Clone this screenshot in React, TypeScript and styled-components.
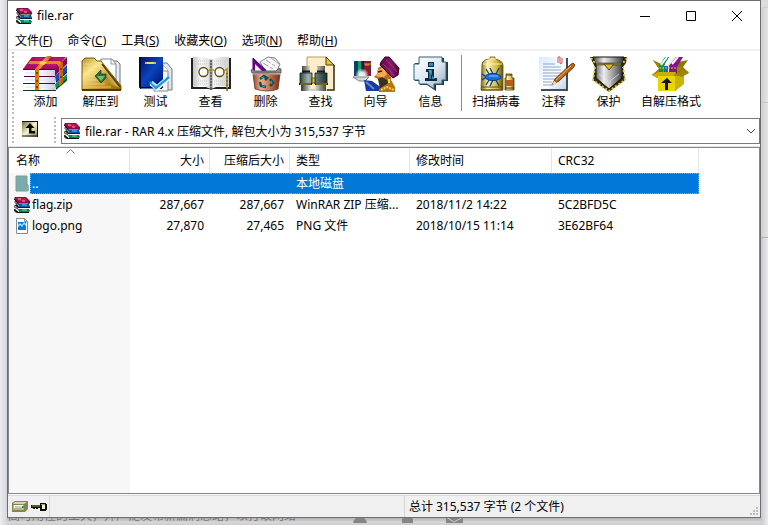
import React from "react";
import styled, { createGlobalStyle } from "styled-components";

const GlobalStyle = createGlobalStyle`
  * { box-sizing: border-box; }
  body {
    margin: 0;
    color: #000;
    font: 12px/16px "Noto Sans", "Noto Sans CJK SC", sans-serif;
  }
  button, select { font: inherit; color: inherit; }
`;

const Desktop = styled.div`
  min-height: 100vh;
  display: flex;
  flex-direction: column;
  padding: 0 7px;
  background:
    linear-gradient(#d0d0d0, #d0d0d0) right 7px / 7px 1px no-repeat,
    linear-gradient(#c8c8c8, #c8c8c8) right 102px / 7px 1px no-repeat,
    linear-gradient(#b0b0b0, #b0b0b0) right 237px / 7px 1px no-repeat,
    linear-gradient(90deg, #cfcfcf, #e6e6e6) right 8px / 7px 229px no-repeat,
    linear-gradient(90deg, #c9c9cb, #ececf0) right bottom / 7px calc(100vh - 238px) no-repeat,
    linear-gradient(90deg, #ededf1, #d6d6da) left top / 7px 100vh no-repeat,
    #dcdcdc;
`;

const Window = styled.main`
  flex: 1;
  display: flex;
  flex-direction: column;
  border: 1px solid #6e6e6e;
  background: #fff;
`;

const TitleBar = styled.header`
  display: flex;
  align-items: center;
  gap: 5px;
  height: 30px;
  padding-left: 8px;
`;

const Title = styled.h1`
  flex: 1;
  margin: 0;
  font-size: 12px;
  font-weight: 400;
`;

const CaptionButton = styled.button`
  display: grid;
  place-items: center;
  width: 46px;
  height: 30px;
  margin-left: -5px;
  padding: 0;
  border: 0;
  background: none;
`;

const MenuBar = styled.nav`
  display: flex;
  gap: 15px;
  height: 20px;
  padding: 2px 7px 0;
  border-bottom: 2px solid #f0f0f0;
`;

const MenuItem = styled.button`
  padding: 0;
  border: 0;
  background: none;
  line-height: 16px;
  white-space: nowrap;
`;

const Grip = styled.div`
  width: 2px;
  align-self: stretch;
  background: repeating-linear-gradient(#bdbdbd 0 2px, #fff 2px 4px);
`;

const Toolbar = styled.div`
  display: flex;
  height: 64px;
  padding: 1px 0 0 4px;
`;

const ToolButton = styled.button<{ $width?: number }>`
  display: flex;
  flex-direction: column;
  align-items: center;
  gap: 2px;
  width: ${(p) => p.$width ?? 55}px;
  padding: 4px 0 0;
  border: 0;
  background: none;
  line-height: 16px;
  white-space: nowrap;
`;

const ToolGap = styled.div`
  width: 4px;
`;

const Separator = styled.div`
  width: 1px;
  height: 56px;
  margin: 3px 4px 0 3px;
  background: #8c8c8c;
`;

const AddressRow = styled.div`
  display: flex;
  height: 32px;
  padding: 2px 0 3px 4px;
`;

const UpButton = styled.button`
  width: 16px;
  height: 16px;
  margin: 4px 16px 0 8px;
  padding: 0;
  border: 0;
  background: none;
  line-height: 0;
`;

const AddressBox = styled.div`
  flex: 1;
  display: flex;
  align-items: center;
  gap: 5px;
  height: 26px;
  margin: 1px 0 0 5px;
  padding: 0 3px 0 2px;
  border: 1px solid #7a7a7a;
`;

const AddressSelect = styled.select`
  flex: 1;
  min-width: 0;
  height: 24px;
  padding: 2px 0 0;
  border: 0;
  outline: 0;
  appearance: none;
  background: none;
`;

const ListPane = styled.section`
  flex: 1;
  display: flex;
  flex-direction: column;
  border: 1px solid #828790;
  box-shadow: 0 -1px 0 #e3e3e3;
`;

const FileTable = styled.table`
  width: 690px;
  table-layout: fixed;
  border-spacing: 0;
`;

const HeadCell = styled.th<{ $width: number; $right?: boolean }>`
  width: ${(p) => p.$width}px;
  height: 25px;
  padding: 0 5px 0 6px;
  border-right: 1px solid #e5e5e5;
  font-weight: 400;
  text-align: ${(p) => (p.$right ? "right" : "left")};
  white-space: nowrap;
  position: relative;

  &:first-child {
    padding-left: 7px;
  }
`;

const SortArrow = styled.svg`
  position: absolute;
  top: 1px;
  left: calc(50% - 3px);
`;

const Row = styled.tr`
  height: 21px;
`;

const Cell = styled.td<{ $right?: boolean; $selected?: boolean; $last?: boolean }>`
  height: 21px;
  padding: 0 6px;
  text-align: ${(p) => (p.$right ? "right" : "left")};
  white-space: nowrap;
  ${(p) =>
    p.$selected &&
    `color: #fff;
     background: #0078d7;
     border: 0 dotted #ff8a28;
     border-width: 1px ${p.$last ? 1 : 0}px 1px 0;`}
`;

const NameCell = styled.td`
  padding: 0;
  background: #f7f7f7;
`;

const NameContent = styled.div`
  display: flex;
  height: 21px;
`;

const FileIcon = styled.span`
  display: grid;
  place-items: center;
  width: 21px;
  padding-left: 5px;
`;

const FileName = styled.span<{ $selected?: boolean }>`
  flex: 1;
  padding-left: 2px;
  line-height: 21px;
  ${(p) =>
    p.$selected &&
    `color: #fff;
     background: #0078d7;
     border: 1px dotted #ff8a28;
     border-right: 0;
     padding-left: 1px;
     line-height: 19px;`}
`;

const NameFill = styled.div`
  flex: 1;
  width: 121px;
  background: #f7f7f7;
`;

const StatusBar = styled.footer`
  display: flex;
  height: 23px;
  padding-top: 2px;
  background: #f0f0f0;
  box-shadow: inset 0 1px 0 #fafafa, inset 0 2px 0 #d9d9d9;
`;

const StatusPane = styled.div<{ $width?: number }>`
  display: flex;
  align-items: center;
  gap: 3px;
  ${(p) => (p.$width ? `width: ${p.$width}px;` : "flex: 1;")}
  padding-left: 4px;
  border-right: 1px solid #d7d7d7;
  white-space: nowrap;
`;

const StatusFill = styled(StatusPane)`
  flex: 360;
`;

const StatusTotal = styled(StatusPane)`
  flex: 351;
  border-right: 0;
`;

const SizeGrip = styled.svg`
  align-self: flex-end;
  margin: 0 1px 1px 0;
`;

const Behind = styled.div`
  display: flex;
  align-items: flex-end;
  gap: 57px;
  height: 7px;
  padding-left: 1px;
  overflow: hidden;
  color: #777;
  border-bottom: 2px solid #d0d0d0;
  background: linear-gradient(#b4b4b4, #dcdcdc);
  line-height: 14px;
  white-space: nowrap;
`;

/* ---------- small icons ---------- */

const Books = () => (
  <svg width="16" height="16" viewBox="0 0 16 16" aria-hidden="true">
    <path d="M1 0H12L16 4V6H4L0 2Z" fill="#8b0a4c" />
    <path d="M2 1H11L14 4H5Z" fill="#c3126e" />
    <path d="M4 2H7M8 4H11" stroke="#e9b44c" />
    <path d="M0 2L4 6V7H15V6" fill="none" stroke="#160812" />
    <path d="M1 4L4 7L1 6ZM1 8L4 12L0 10ZM0 12L4 15L1 15Z" fill="#d9d9d9" stroke="#222" strokeWidth=".7" />
    <path d="M4 7H15L16 10H5Z" fill="#075aa6" />
    <path d="M8 8H13" stroke="#65c9ef" />
    <path d="M3 7L5 10H16V11H4L1 8" fill="#101828" />
    <path d="M4 12H15L16 14L15 15H5Z" fill="#078657" />
    <path d="M8 13H13" stroke="#7ae2a6" />
    <path d="M1 12L4 15H15V16H3L0 13Z" fill="#07150f" />
  </svg>
);

const UpIcon = () => (
  <svg width="16" height="16" viewBox="0 0 16 16" aria-hidden="true">
    <defs>
      <linearGradient id="up" x1="0" y1="0" x2="1" y2="1">
        <stop stopColor="#656631" /><stop offset=".5" stopColor="#f5f2cf" /><stop offset="1" stopColor="#77783d" />
      </linearGradient>
    </defs>
    <path fill="url(#up)" d="M0 0H16V16H0Z" />
    <path d="M0 .5H16M15.5 0V16M0 15H16" stroke="#111100" />
    <path d="M8 2L12.5 7H9.5V10H13V12.5H7V7H3.5Z" fill="#080800" />
  </svg>
);

const FolderIcon = () => (
  <svg width="14" height="17" viewBox="0 0 14 17" aria-hidden="true">
    <path d="M1 1H12V9L13 10V16H1Z" fill="#78aab3" stroke="#70a494" />
    <path d="M11 11V16M13 10V16" stroke="#8eae8f" />
  </svg>
);

const PngIcon = () => (
  <svg width="12" height="16" viewBox="0 0 12 16" aria-hidden="true">
    <path d="M.5 .5H8.5L11.5 3.5V15.5H.5Z" fill="#fff" stroke="#8b8b8b" />
    <path d="M8.5 .5V3.5H11.5" fill="none" stroke="#8b8b8b" />
    <path d="M2 4H10V12H2Z" fill="#1178d4" />
    <path d="M2 9L4 7L6 9L8 6L10 8V6L8 4L6 7L4 5L2 7Z" fill="#b8e2ff" />
  </svg>
);

const DriveIcon = () => (
  <svg width="16" height="11" viewBox="0 0 16 11" aria-hidden="true">
    <path d="M3 0H16V8L13 11H0V2Z" fill="#85864a" />
    <path d="M3 1H15L12 3H1Z" fill="#d5d5ae" />
    <path d="M1 4H12V9H1Z" fill="#b8b88a" />
    <path d="M2 4H11V7H2Z" fill="#fff" />
    <path d="M3 6H10" stroke="#8d9b83" />
    <path d="M10 5H12V7H10Z" fill="#129b91" />
  </svg>
);

const KeyIcon = () => (
  <svg width="16" height="8" viewBox="0 0 16 8" aria-hidden="true">
    <path d="M0 2H9V0H15V1H16V7H15V8H9V5H7V6H5V5H4V6H2V5H0Z" fill="#0b0b00" />
    <path d="M1 3H9M10 1.5H14" stroke="#a6a65c" />
    <path d="M11 2H14V6H11Z" fill="#f0f0d8" />
  </svg>
);

/* ---------- toolbar pictures ---------- */

const Picture = ({ children }: { children: React.ReactNode }) => (
  <svg width="48" height="36" viewBox="0 0 48 36" aria-hidden="true">{children}</svg>
);

const AddPicture = () => (
  <Picture>
    <defs>
      <linearGradient id="pages" x1="0" x2="1"><stop stopColor="#fff" /><stop offset=".6" stopColor="#f4f5fb" /><stop offset="1" stopColor="#c4c8e0" /></linearGradient>
      <linearGradient id="belt" x1="0" x2="1"><stop stopColor="#d96e08" /><stop offset=".5" stopColor="#ffa033" /><stop offset="1" stopColor="#c25f00" /></linearGradient>
    </defs>
    <path d="M32 13L45 1V8L33 20Z" fill="#8a0850" />
    <path d="M33 20L45 9V17L34 27Z" fill="#1648c8" />
    <path d="M33 28L45 18V25L34 34Z" fill="#0f8f45" />
    <path d="M34 26L45 16M34 33L45 23" stroke="#0a1640" />
    <path d="M3 14H33V20H3ZM2 21H33V27H2ZM2 28H33V34H2Z" fill="url(#pages)" />
    <path d="M3 17H32M3 24H32M3 31H32" stroke="#dfe2f0" />
    <path d="M2 20.5H33" stroke="#4a0630" />
    <path d="M1 27.5H33" stroke="#12236e" />
    <path d="M1 34.5H34" stroke="#0b3a22" />
    <path d="M10 1H44L33 13H1Z" fill="#a90b66" />
    <path d="M13 3H22M8 8H18M31 3H41M25 9H34" stroke="#c22a83" />
    <path d="M1 13.5H33" stroke="#53002d" />
    <path d="M8 5L38 5L41 8L37 11L35 8H6Z" fill="#e7861b" />
    <path d="M25 0H30L18 13H13Z" fill="url(#belt)" />
    <path d="M13 13H17V34H13ZM37 9L41 6V27L37 30Z" fill="url(#belt)" />
    <path d="M14 17H16M14 25H16M14 31H16M38 13H40M38 21H40" stroke="#5b521e" strokeWidth="2" />
    <path d="M19 5L25 6L22 9L17 8Z" fill="#ffcf5b" />
  </Picture>
);

const ExtractPicture = () => (
  <Picture>
    <defs>
      <linearGradient id="fold" x1="0" y1="0" x2="1" y2="1"><stop stopColor="#b99424" /><stop offset=".3" stopColor="#fbe995" /><stop offset=".65" stopColor="#c5992d" /><stop offset="1" stopColor="#8c6200" /></linearGradient>
      <linearGradient id="flap" x1="0" y1="1" x2="1" y2="0"><stop stopColor="#5d3b00" /><stop offset=".5" stopColor="#d8b84d" /><stop offset="1" stopColor="#fff5bd" /></linearGradient>
    </defs>
    <path d="M28 5H40L43 8V30H28Z" fill="#e8edf2" stroke="#697583" />
    <path d="M24 3H35L39 8V29H24Z" fill="#fff" stroke="#778491" />
    <path d="M34 3V8H39" fill="none" stroke="#8997a5" />
    <path d="M5 5L8 2H17L20 5H24L44 30V34H5Z" fill="url(#fold)" stroke="#7b5a0b" />
    <path d="M6 8H23M7 12H23M7 16H20M7 20H18M7 24H21M7 28H28M7 31H34" stroke="#f8dc80" opacity=".7" />
    <path d="M24 7L30 15L27 20L31 27L43 32Z" fill="url(#flap)" />
    <path d="M25 8L43 31" stroke="#513900" strokeWidth="1.5" />
    <path d="M18 20L24 14V18H29V22L24 27Z" fill="#267237" stroke="#173a20" strokeWidth=".7" />
    <path d="M20 20H28L24 25Z" fill="#80b66a" />
    <path d="M5 34H44" stroke="#553600" strokeWidth="2" />
  </Picture>
);

const TestPicture = () => (
  <Picture>
    <defs><linearGradient id="blueBook" x1="0" y1="0" x2="1" y2="1"><stop stopColor="#06105e" /><stop offset=".5" stopColor="#0846bd" /><stop offset="1" stopColor="#000b65" /></linearGradient></defs>
    <path d="M29 7H35L40 13V34H27Z" fill="#e3e7eb" stroke="#6f7a84" />
    <path d="M22 9H31L36 15V35H22Z" fill="#f5f5f5" stroke="#7e878f" />
    <path d="M31 9V15H36" fill="#fff" stroke="#8b8b8b" />
    <path d="M7 1H31V32H7Z" fill="url(#blueBook)" />
    <path d="M8 1V31M8 32H30" stroke="#00083d" strokeWidth="2" />
    <path d="M9 33H26" stroke="#dce4ff" />
    <path d="M13 7H24" stroke="#d1b84d" strokeWidth="2" />
    <path d="M15 7H22" stroke="#fff4a5" />
    <path d="M19 27L25 32L36 22" fill="none" stroke="#fff" strokeWidth="5" />
    <path d="M18 26L24 32L37 21" fill="none" stroke="#179ce4" strokeWidth="2.5" />
    <path d="M20 27L24 30L34 22" fill="none" stroke="#8be5ff" />
  </Picture>
);

const ViewPicture = () => (
  <Picture>
    <defs><linearGradient id="leaf" x1="0" x2="1"><stop stopColor="#c4c4c4" /><stop offset=".22" stopColor="#f6f6f6" /><stop offset=".43" stopColor="#e4e4e4" /><stop offset=".5" stopColor="#888" /><stop offset=".57" stopColor="#f4f4f4" /><stop offset="1" stopColor="#cfcfcf" /></linearGradient></defs>
    <path d="M4 2H6V31H42V2H44V33H26L24 34L22 33H4Z" fill="#222" />
    <path d="M6 1Q17 0 24 4Q31 0 42 1V31Q31 29 24 33Q17 29 6 31Z" fill="url(#leaf)" />
    <path d="M9 5H21M9 8H21M9 25H21M9 28H21M27 5H39M27 8H39M27 25H38M27 28H38" stroke="#c2c2c2" strokeDasharray="1 1" />
    <path d="M24 4V33" stroke="#333" strokeDasharray="2 1" />
    <circle cx="16.500" cy="16" r="4.500" fill="#fafaf6" stroke="#5e4a12" strokeWidth="1.3" />
    <circle cx="32.500" cy="16" r="4.500" fill="#fafaf6" stroke="#5e4a12" strokeWidth="1.3" />
    <path d="M21 15Q24 12 28 15M37 15L40 13V19" fill="none" stroke="#b08f1c" strokeWidth="1.5" />
    <path d="M40 17V35" stroke="#6c5406" strokeWidth="1.5" />
    <path d="M40 18V33" stroke="#d9bb3f" strokeDasharray="2 2" />
  </Picture>
);

const DeletePicture = () => (
  <Picture>
    <defs><linearGradient id="bin" x1="0" x2="1"><stop stopColor="#8b4a33" /><stop offset=".3" stopColor="#eab394" /><stop offset=".65" stopColor="#c26a48" /><stop offset="1" stopColor="#74301c" /></linearGradient></defs>
    <path d="M18 6L26 1L33 2L38 8L34 17H24Z" fill="#f4f4f4" stroke="#84848c" />
    <path d="M24 4L33 10M21 7L31 13M29 2L37 8" stroke="#a7a7b2" />
    <path d="M11 2L27 17H11Z" fill="#6f008f" stroke="#40005b" />
    <path d="M13 8L20 15H13Z" fill="#f2f2f2" />
    <path d="M25 15L31 5" stroke="#fff" strokeWidth="2" />
    <path d="M9 14Q10 12 13 15H34Q37 11 39 13V17H10Z" fill="#8c8c90" stroke="#4d4d4f" strokeWidth=".8" />
    <path d="M11 18H38L36 33Q26 37 13 33Z" fill="url(#bin)" stroke="#69301e" strokeWidth=".8" />
    <path d="M11 18H38" stroke="#e0c9bc" />
    <path d="M18 23L22 20L25 22L23 24M28 23L31 27L28 30M24 31L19 30L18 26" fill="none" stroke="#0b5257" strokeWidth="2.5" />
    <path d="M19 22L22 21M29 25L30 28M23 31L20 30" fill="none" stroke="#2ca8a6" strokeWidth="1.2" />
  </Picture>
);

const FindPicture = () => (
  <Picture>
    <defs><linearGradient id="tube" x1="0" x2="1"><stop stopColor="#2b4543" /><stop offset=".3" stopColor="#9db2b0" /><stop offset=".65" stopColor="#54716f" /><stop offset="1" stopColor="#1c3230" /></linearGradient><linearGradient id="lens" x1="0" x2="1"><stop stopColor="#333" /><stop offset=".45" stopColor="#fff" /><stop offset="1" stopColor="#444" /></linearGradient></defs>
    <path d="M10 1H29L37 9V34H10Z" fill="#fbedc9" stroke="#b99d66" />
    <path d="M29 1V9H37Z" fill="#e6c12e" stroke="#594000" />
    <path d="M37 9V34H30" fill="none" stroke="#403825" strokeWidth="1.5" />
    <path d="M5 10H13V17H5ZM20 10H28V17H20ZM4 28H14V35H4ZM18 28H29V35H18Z" fill="url(#lens)" />
    <path d="M3 17H15V28H3ZM18 17H30V28H18Z" fill="url(#tube)" stroke="#0b1b19" strokeWidth=".8" />
    <path d="M5 15.500H13M20 15.500H28M2 28H15M18 28H31" stroke="#1c1c08" strokeWidth="2" />
    <path d="M3 28H14M19 28H30" stroke="#c5b21e" />
    <path d="M15 22H18V27H15Z" fill="#d8bd1a" stroke="#3e3500" strokeWidth=".7" />
  </Picture>
);

const WizardPicture = () => (
  <Picture>
    <defs><radialGradient id="glow"><stop stopColor="#fff" /><stop offset=".4" stopColor="#eafff5" stopOpacity=".9" /><stop offset="1" stopColor="#fff" stopOpacity="0" /></radialGradient><linearGradient id="turban" x1="0" x2="1"><stop stopColor="#5a0a40" /><stop offset=".6" stopColor="#86186a" /><stop offset="1" stopColor="#4f0535" /></linearGradient></defs>
    <path d="M2 5H6V20H2Z" fill="#153b61" /><path d="M6 5H9V20H6Z" fill="#00a66d" /><path d="M9 5H12V20H9Z" fill="#16154d" /><path d="M12 5H19V20H12Z" fill="#841b35" />
    <path d="M12 8H19M13 9H17" stroke="#d0b02d" />
    <circle cx="10" cy="19" r="7" fill="url(#glow)" />
    <path d="M1 21H17L13 25H7Z" fill="#d5d9d8" stroke="#7e8786" />
    <path d="M12 24L20 25L27 30L34 35H14Z" fill="#183b99" />
    <path d="M14 26L22 33" stroke="#5d86ea" strokeWidth="2" />
    <path d="M26 12L31 9L40 17L38 29L29 28L26 23L22 21L25 18Z" fill="#bb6a22" />
    <path d="M26 14L31 11L35 18L31 22L24 20Z" fill="#f2aa52" />
    <path d="M26 16L30 15" stroke="#3c190b" strokeWidth="1.5" />
    <path d="M26 23L30 21L35 24L37 28L34 33H28Z" fill="#383025" />
    <path d="M35 28L39 24L43 31V36H27V33Z" fill="#b97416" />
    <path d="M29 34L35 31L42 34" fill="none" stroke="#ffd04e" strokeWidth="2" strokeDasharray="2 1" />
    <path d="M29 6L33 1H37L47 12L46 19L41 22L34 15L28 9Z" fill="url(#turban)" stroke="#350020" />
    <path d="M31 8Q37 12 42 20M34 4Q40 9 45 16" fill="none" stroke="#a43787" />
    <path d="M37 23V27" stroke="#f2dd27" strokeWidth="2" />
    <path d="M9 1V4M18 0V3M16 2H20M22 10V13" stroke="#dae0df" strokeDasharray="1 1" />
  </Picture>
);

const InfoPicture = () => (
  <Picture>
    <defs><linearGradient id="bubble" x1="0" y1="0" x2="1" y2="1"><stop stopColor="#fff" /><stop offset=".55" stopColor="#dbe4ed" /><stop offset="1" stopColor="#91a3b3" /></linearGradient></defs>
    <path d="M12 2H37V6H41V25H37V29H29V35L20 29H13V25H8V7H12Z" fill="#18394b" />
    <path d="M12 1H35V6H39V24H35V28H27V33L20 28H12V24H7V8H12Z" fill="url(#bubble)" stroke="#32617b" />
    <path d="M21 6H27V11H21ZM19 13H27V22H30V25H18V22H21V16H19Z" fill="#0a2943" />
    <path d="M22 7H26V10H22ZM21 14H25V23H28" fill="#278bc0" />
    <path d="M23 14V23" stroke="#65bdea" />
  </Picture>
);

const VirusPicture = () => (
  <Picture>
    <defs><linearGradient id="gold" x1="0" x2="1"><stop stopColor="#7b6910" /><stop offset=".3" stopColor="#fdf3b4" /><stop offset=".75" stopColor="#cdb335" /><stop offset="1" stopColor="#5a4c00" /></linearGradient></defs>
    <path d="M10 8Q11 3 18 3V1H23V3Q30 4 31 9V34H9Z" fill="url(#gold)" stroke="#6c5a08" strokeWidth=".8" />
    <path d="M16 3H24M11 8H30" stroke="#fff4b5" /><path d="M9 31H31M9 34H31" stroke="#5b4a04" />
    <path d="M17 18L14 13M21 18L18 12M24 18L27 12M17 24L14 29M21 24L18 30M24 24L27 30M13 20L10 18M13 22L10 24" fill="none" stroke="#0a3f97" strokeWidth="1.3" />
    <ellipse cx="21" cy="21" rx="8" ry="3.500" fill="#1b6ee0" stroke="#053a80" />
    <path d="M17 20H26" stroke="#8cc6ff" />
    <path d="M34 18H40V22H42V34H33V22H34Z" fill="url(#gold)" stroke="#544500" strokeWidth=".8" />
    <path d="M34 24H41V30H34Z" fill="#b3601f" /><path d="M34 19H40M33 32H42" stroke="#3d3200" />
  </Picture>
);

const CommentPicture = () => (
  <Picture>
    <defs><linearGradient id="paper" x1="0" y1="0" x2="1" y2="1"><stop stopColor="#d9e9ff" /><stop offset=".6" stopColor="#fff" /><stop offset="1" stopColor="#bed3f2" /></linearGradient></defs>
    <path d="M11 2H38V35H11Z" fill="#444d58" /><path d="M9 1H36V33H9Z" fill="url(#paper)" />
    <path d="M13 8H25M13 11H31M13 14H31M13 17H31M13 20H31M13 23H26M13 26H22M13 29H22" stroke="#8ba5c7" />
    <path d="M28 7V2Q28 0 30 1V7Q30 9 32 7V2" fill="none" stroke="#d64a4d" />
    <path d="M22 29L25 23L40 9L43 7L45 9L43 12L29 25Z" fill="#bd6418" stroke="#4e2600" strokeWidth=".8" />
    <path d="M26 24L41 10" stroke="#ffb24b" /><path d="M22 29L24 25L27 27Z" fill="#f9daaa" />
  </Picture>
);

const ProtectPicture = () => (
  <Picture>
    <defs><linearGradient id="steel" x1="0" x2="1"><stop stopColor="#444" /><stop offset=".35" stopColor="#ededed" /><stop offset=".6" stopColor="#aaa" /><stop offset="1" stopColor="#333" /></linearGradient></defs>
    <path d="M5 1H42L41 7L38 11L40 24L24 36L8 24L10 11Z" fill="#302b08" />
    <path d="M8 1H39L37 9V22L24 33L11 22V9Z" fill="url(#steel)" stroke="#111" />
    <path d="M6 2L10 7M42 2L38 7M10 11L8 24L24 35L40 24L38 11" fill="none" stroke="#e0c849" strokeWidth="2" strokeDasharray="2 2" />
    <path d="M12 8H37" stroke="#2b2500" strokeWidth="2.5" />
    <path d="M12 8H36" stroke="#c9b23a" />
    <path d="M19 8H29L24 14Z" fill="#d8b82d" stroke="#594800" />
    <path d="M14 18L23 25V31M34 18L25 25V31" fill="none" stroke="#eee" opacity=".6" />
  </Picture>
);

const SfxPicture = () => (
  <Picture>
    <path d="M6 4L14 8L21 8L41 4L36 11L42 17L36 20V28L28 35H11V22L5 19L12 13Z" fill="#8a7700" />
    <path d="M6 4L16 12L36 11L27 19L12 19L5 19L12 13Z" fill="#a48a00" />
    <path d="M12 10L18 1H22L16 11V17H12Z" fill="#0b914f" />
    <path d="M17 10L23 1H28L22 10V17H17Z" fill="#e4e9f5" /><path d="M17 10H21V17H17Z" fill="#146db1" />
    <path d="M22 10L29 1H36L30 11V17H22Z" fill="#82158c" />
    <path d="M14 9L20 1M19 9L25 1M25 8L31 1" stroke="#fff" strokeWidth="2" />
    <path d="M12 12H29" stroke="#e2cc39" strokeDasharray="2 1" />
    <path d="M5 19L12 16H29L27 20L10 22Z" fill="#c9b000" />
    <path d="M11 20H28V35H11Z" fill="#e8d600" /><path d="M28 20L37 14V28L28 35Z" fill="#c9b400" />
    <path d="M28 19L36 13L42 16L35 21Z" fill="#a08600" />
    <path d="M18 34V27H14L20 22L25 27H21V34Z" fill="#171200" />
  </Picture>
);

/* ---------- data ---------- */

const menus = [["文件", "F"], ["命令", "C"], ["工具", "S"], ["收藏夹", "O"], ["选项", "N"], ["帮助", "H"]];

const mainTools = [
  { label: "添加", Icon: AddPicture },
  { label: "解压到", Icon: ExtractPicture },
  { label: "测试", Icon: TestPicture },
  { label: "查看", Icon: ViewPicture },
  { label: "删除", Icon: DeletePicture },
  { label: "查找", Icon: FindPicture },
  { label: "向导", Icon: WizardPicture },
  { label: "信息", Icon: InfoPicture },
];

const extraTools = [
  { label: "扫描病毒", Icon: VirusPicture, width: 60 },
  { label: "注释", Icon: CommentPicture, width: 55 },
  { label: "保护", Icon: ProtectPicture, width: 55 },
  { label: "自解压格式", Icon: SfxPicture, width: 70 },
];

const columns = [
  { label: "名称", width: 121, sorted: true },
  { label: "大小", width: 80, right: true },
  { label: "压缩后大小", width: 80, right: true },
  { label: "类型", width: 120 },
  { label: "修改时间", width: 142 },
  { label: "CRC32", width: 147 },
];

const files = [
  { name: "..", Icon: FolderIcon, selected: true, cells: ["", "", "本地磁盘", "", ""] },
  { name: "flag.zip", Icon: Books, cells: ["287,667", "287,667", "WinRAR ZIP 压缩...", "2018/11/2 14:22", "5C2BFD5C"] },
  { name: "logo.png", Icon: PngIcon, cells: ["27,870", "27,465", "PNG 文件", "2018/10/15 11:14", "3E62BF64"] },
];

export default function App() {
  return (
    <>
      <GlobalStyle />
      <Desktop>
        <Window>
          <TitleBar>
            <Books />
            <Title>file.rar</Title>
            <CaptionButton aria-label="最小化">
              <svg width="10" height="10"><path d="M0 5.5H10" stroke="#000" /></svg>
            </CaptionButton>
            <CaptionButton aria-label="最大化">
              <svg width="10" height="10"><path d="M.5 .5H9.5V9.5H.5Z" fill="none" stroke="#000" /></svg>
            </CaptionButton>
            <CaptionButton aria-label="关闭">
              <svg width="10" height="10"><path d="M0 0L10 10M10 0L0 10" stroke="#000" /></svg>
            </CaptionButton>
          </TitleBar>

          <MenuBar>
            {menus.map(([label, key]) => (
              <MenuItem key={key}>{label}(<u>{key}</u>)</MenuItem>
            ))}
          </MenuBar>

          <Toolbar role="toolbar">
            <Grip />
            <ToolGap />
            {mainTools.map(({ label, Icon }) => (
              <ToolButton key={label}><Icon />{label}</ToolButton>
            ))}
            <Separator />
            {extraTools.map(({ label, Icon, width }) => (
              <ToolButton key={label} $width={width}><Icon />{label}</ToolButton>
            ))}
          </Toolbar>

          <AddressRow>
            <Grip />
            <UpButton aria-label="向上"><UpIcon /></UpButton>
            <Grip />
            <AddressBox>
              <Books />
              <AddressSelect aria-label="地址">
                <option>file.rar - RAR 4.x 压缩文件, 解包大小为 315,537 字节</option>
              </AddressSelect>
              <svg width="10" height="6" aria-hidden="true"><path d="M1 1L5 5L9 1" fill="none" stroke="#444" /></svg>
            </AddressBox>
          </AddressRow>

          <ListPane>
            <FileTable>
              <thead>
                <tr>
                  {columns.map((c) => (
                    <HeadCell key={c.label} $width={c.width} $right={c.right} scope="col">
                      {c.label}
                      {c.sorted && (
                        <SortArrow width="9" height="5" aria-hidden="true">
                          <path d="M.5 4.5L4.5 .5L8.5 4.5" fill="none" stroke="#777" />
                        </SortArrow>
                      )}
                    </HeadCell>
                  ))}
                </tr>
              </thead>
              <tbody>
                {files.map(({ name, Icon, selected, cells }) => (
                  <Row key={name}>
                    <NameCell>
                      <NameContent>
                        <FileIcon><Icon /></FileIcon>
                        <FileName $selected={selected}>{name}</FileName>
                      </NameContent>
                    </NameCell>
                    {cells.map((text, i) => (
                      <Cell key={i} $right={i < 2} $selected={selected} $last={i === 4}>{text}</Cell>
                    ))}
                  </Row>
                ))}
              </tbody>
            </FileTable>
            <NameFill />
          </ListPane>

          <StatusBar>
            <StatusPane $width={42}><DriveIcon /><KeyIcon /></StatusPane>
            <StatusFill />
            <StatusTotal>总计 315,537 字节 (2 个文件)</StatusTotal>
            <SizeGrip width="9" height="9" aria-hidden="true">
              <path d="M6 0h2v2h-2zM3 3h2v2h-2zM6 3h2v2h-2zM0 6h2v2h-2zM3 6h2v2h-2zM6 6h2v2h-2z" fill="#bcbcbc" />
            </SizeGrip>
          </StatusBar>
        </Window>
        <Behind aria-hidden="true">
          <span>高可用性的工具，并广泛发布新漏洞思路，以打破网络</span>
          <svg width="110" height="6">
            <path d="M0 6Q1 0 7 0Q13 0 14 6ZM49 6V2Q54 -3 60 2V6ZM93 0H110V6H93Z" fill="#858585" />
            <path d="M93 0L101 5L110 0" fill="none" stroke="#ccc" />
          </svg>
        </Behind>
      </Desktop>
    </>
  );
}
